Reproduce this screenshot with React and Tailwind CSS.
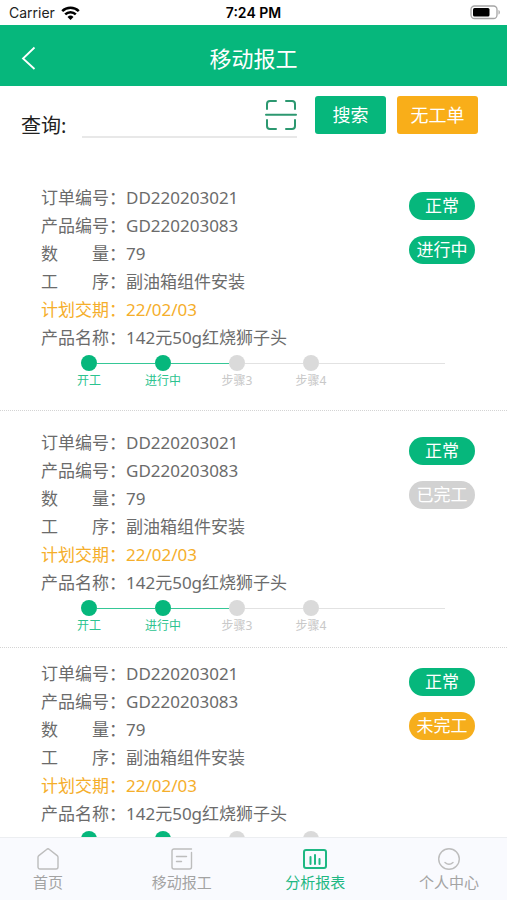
import React from 'react';

const orders = [
  { id: 1, status: '进行中', statusColor: 'bg-[#06b77c]', spacing: 'pb-[21px]' },
  { id: 2, status: '已完工', statusColor: 'bg-[#d2d2d2]', spacing: 'pt-[18px] pb-[13px]' },
  { id: 3, status: '未完工', statusColor: 'bg-[#f6ae1c]', spacing: 'pt-3 pb-5' },
];

const fields = [
  { label: '订单编号', value: 'DD220203021' },
  { label: '产品编号', value: 'GD220203083' },
  { label: '数量', value: '79' },
  { label: '工序', value: '副油箱组件安装' },
  { label: '计划交期', value: '22/02/03', highlight: true },
  { label: '产品名称', value: '142元50g红烧狮子头' },
];

const steps = [
  { name: '开工', done: true },
  { name: '进行中', done: true },
  { name: '步骤3', done: false },
  { name: '步骤4', done: false },
];

const StatusBar = () => (
  <div className="relative flex h-[25px] items-center justify-between pl-[9px] pr-[6px] font-['Inter',sans-serif] text-sm text-[#222]">
    <div className="flex items-center gap-1.5">
      <span>Carrier</span>
      <svg width="19" height="14" viewBox="0 0 19 14" fill="none" stroke="#000" strokeWidth="2.5">
        <path d="M1.2 5.2a11.8 11.8 0 0 1 16.6 0" />
        <path d="M4.2 8.4a7.5 7.5 0 0 1 10.6 0" />
        <path d="M9.5 14l-3-3.1a4.3 4.3 0 0 1 6 0z" fill="#000" stroke="none" />
      </svg>
    </div>
    <span className="absolute inset-x-0 text-center font-semibold text-black">7:24 PM</span>
    <svg width="31" height="15" viewBox="0 0 31 15" fill="none">
      <rect x="1" y="1" width="26" height="12.5" rx="3.5" stroke="#a5a5a5" strokeWidth="1.3" />
      <rect x="3" y="3" width="16.5" height="8.5" rx="1.5" fill="#000" />
      <path d="M28.5 5c1.8.6 1.8 4 0 4.6z" fill="#a5a5a5" />
    </svg>
  </div>
);

const Header = () => (
  <header className="relative flex h-[61px] items-center justify-center bg-[#06b77c] pt-1 text-white">
    <button type="button" aria-label="返回" className="absolute left-4 p-1">
      <svg width="16" height="24" viewBox="0 0 16 24" fill="none" stroke="currentColor" strokeWidth="1.8">
        <path d="M14.5 1.5L3 12.5l11.5 10.5" />
      </svg>
    </button>
    <h1 className="text-[22px] leading-8">移动报工</h1>
  </header>
);

const SearchBar = () => (
  <form className="flex items-start pt-2.5 pr-[29px] pb-11 pl-[21px]" onSubmit={(e) => e.preventDefault()}>
    <label htmlFor="query" className="mt-4 w-[61px] shrink-0 text-xl leading-7 text-[#222]">
      查询:
    </label>
    <div className="flex h-[42px] min-w-0 flex-1 items-start border-b-2 border-[#e8e8e8]">
      <input id="query" type="text" className="h-10 min-w-0 flex-1 bg-transparent px-1 text-lg outline-none" />
      <button type="button" aria-label="扫码" className="mt-1 shrink-0">
        <svg width="32" height="30" viewBox="0 0 32 30" fill="none" stroke="#2c9870" strokeWidth="2" strokeLinecap="round">
          <path d="M2 9V4a3 3 0 0 1 3-3h6M21 1h6a3 3 0 0 1 3 3v5" />
          <path d="M2 20v6a3 3 0 0 0 3 3h6M21 29h6a3 3 0 0 0 3-3v-6" />
          <path d="M1 14.7h30" />
        </svg>
      </button>
    </div>
    <button type="submit" className="ml-[18px] h-[38px] w-[71px] rounded-[3px] bg-[#06b77c] text-lg text-white">
      搜索
    </button>
    <button type="button" className="ml-[11px] h-[38px] w-[81px] rounded-[3px] bg-[#f9ae19] text-lg text-white">
      无工单
    </button>
  </form>
);

const StepProgress = () => (
  <ol className="mt-[3px] mr-[62px] ml-[81px] flex">
    {steps.map((step, i) => (
      <li key={step.name} className={i === steps.length - 1 ? 'flex-1' : 'w-[74px]'}>
        <div className="flex items-center">
          <span className={`size-4 rounded-full ${step.done ? 'bg-[#06b77c]' : 'bg-[#dadada]'}`} />
          <span className={`h-px flex-1 ${step.done ? 'bg-[#35c796]' : 'bg-[#e2e2e2]'}`} />
        </div>
        <p className={`-ml-4 w-12 pt-0.5 text-center text-xs leading-4 ${step.done ? 'text-[#2cc38f]' : 'text-[#c8c8c8]'}`}>
          {step.name}
        </p>
      </li>
    ))}
  </ol>
);

const OrderCard = ({ order }) => (
  <article className={`border-b border-dotted border-[#d4d4d4] ${order.spacing}`}>
    <div className="flex items-start justify-between pr-8 pl-[41px]">
      <dl className="text-[17px] leading-7 text-[#6b6b6b]">
        {fields.map(({ label, value, highlight }) => (
          <div key={label} className={`flex ${highlight ? 'text-[#f5ae2b]' : ''}`}>
            <dt className="flex w-[85px]">
              <span className="flex w-[68px] justify-between">
                {label.length === 2 ? label.split('').map((char) => <span key={char}>{char}</span>) : label}
              </span>
              ：
            </dt>
            <dd>{value}</dd>
          </div>
        ))}
      </dl>
      <div className="mt-2 flex flex-col gap-4 text-center text-[17px] leading-7 text-white">
        <span className="h-7 w-[66px] rounded-full bg-[#06b77c]">正常</span>
        <span className={`h-7 w-[66px] rounded-full ${order.statusColor}`}>{order.status}</span>
      </div>
    </div>
    <StepProgress />
  </article>
);

const tabs = [
  {
    name: '首页',
    icon: <path d="M1 9.2a2 2 0 0 1 .8-1.6L9.6 1.5a2 2 0 0 1 2.8 0l7.8 6.1a2 2 0 0 1 .8 1.6V19a2 2 0 0 1-2 2H3a2 2 0 0 1-2-2z" />,
  },
  {
    name: '移动报工',
    icon: (
      <>
        <path d="M20.5 1H3a2 2 0 0 0-2 2v16a2 2 0 0 0 2 2h15.5a2 2 0 0 0 2-2V4.5" />
        <path d="M5.5 8.5h10M5.5 13.5h5" />
      </>
    ),
  },
  {
    name: '分析报表',
    active: true,
    icon: (
      <>
        <rect x="0" y="2" width="22" height="18" rx="2" />
        <path d="M6.5 9v7M11 7v9M15.5 11v5" />
      </>
    ),
  },
  {
    name: '个人中心',
    icon: (
      <>
        <circle cx="11" cy="11" r="10.3" />
        <path d="M7 14.5c2.5 2.3 5.5 2.3 8 0" />
      </>
    ),
  },
];

const TabBar = () => (
  <nav className="flex h-[63px] shrink-0 justify-between border-t border-[#eceef1] bg-[#f9fafe] pt-2.5 pr-[26px] pl-4">
    {tabs.map(({ name, icon, active }) => (
      <a
        key={name}
        href="#"
        className={`flex w-16 flex-col items-center gap-0.5 text-[15px] leading-5 ${active ? 'text-[#1fb883]' : 'text-[#a3a3a3]'}`}
      >
        <svg
          width="24"
          height="22"
          viewBox="-1 0 24 22"
          fill="none"
          stroke="currentColor"
          strokeWidth={active ? 2 : 1.4}
          strokeLinecap="round"
          className={active ? '' : 'text-[#bdbdbd]'}
        >
          {icon}
        </svg>
        {name}
      </a>
    ))}
  </nav>
);

const App = () => (
  <div lang="zh-CN" className="flex h-screen flex-col bg-white font-['Noto_Sans','Noto_Sans_CJK_SC',sans-serif]">
    <StatusBar />
    <Header />
    <SearchBar />
    <main className="min-h-0 flex-1 overflow-y-auto [scrollbar-width:none]">
      {orders.map((order) => (
        <OrderCard key={order.id} order={order} />
      ))}
    </main>
    <TabBar />
  </div>
);

export default App;
